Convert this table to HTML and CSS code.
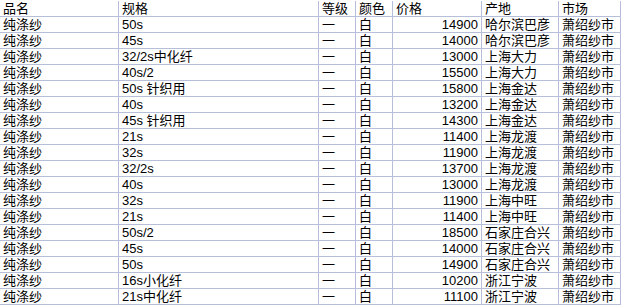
FILE: index.html
```html
<!DOCTYPE html>
<html lang="zh">
<head>
<meta charset="utf-8">
<link rel="stylesheet" href="styles.css">
</head>
<body>
<div class="sheet">
  <div class="c">品名</div><div class="c">规格</div><div class="c">等级</div><div class="c">颜色</div><div class="c">价格</div><div class="c">产地</div><div class="c">市场</div>

  <div class="c">纯涤纱</div><div class="c">50s</div><div class="c">一</div><div class="c">白</div><div class="c num">14900</div><div class="c">哈尔滨巴彦</div><div class="c">萧绍纱市</div>
  <div class="c">纯涤纱</div><div class="c">45s</div><div class="c">一</div><div class="c">白</div><div class="c num">14000</div><div class="c">哈尔滨巴彦</div><div class="c">萧绍纱市</div>
  <div class="c">纯涤纱</div><div class="c">32/2s中化纤</div><div class="c">一</div><div class="c">白</div><div class="c num">13000</div><div class="c">上海大力</div><div class="c">萧绍纱市</div>
  <div class="c">纯涤纱</div><div class="c">40s/2</div><div class="c">一</div><div class="c">白</div><div class="c num">15500</div><div class="c">上海大力</div><div class="c">萧绍纱市</div>
  <div class="c">纯涤纱</div><div class="c">50s 针织用</div><div class="c">一</div><div class="c">白</div><div class="c num">15800</div><div class="c">上海金达</div><div class="c">萧绍纱市</div>
  <div class="c">纯涤纱</div><div class="c">40s</div><div class="c">一</div><div class="c">白</div><div class="c num">13200</div><div class="c">上海金达</div><div class="c">萧绍纱市</div>
  <div class="c">纯涤纱</div><div class="c">45s 针织用</div><div class="c">一</div><div class="c">白</div><div class="c num">14300</div><div class="c">上海金达</div><div class="c">萧绍纱市</div>
  <div class="c">纯涤纱</div><div class="c">21s</div><div class="c">一</div><div class="c">白</div><div class="c num">11400</div><div class="c">上海龙渡</div><div class="c">萧绍纱市</div>
  <div class="c">纯涤纱</div><div class="c">32s</div><div class="c">一</div><div class="c">白</div><div class="c num">11900</div><div class="c">上海龙渡</div><div class="c">萧绍纱市</div>
  <div class="c">纯涤纱</div><div class="c">32/2s</div><div class="c">一</div><div class="c">白</div><div class="c num">13700</div><div class="c">上海龙渡</div><div class="c">萧绍纱市</div>
  <div class="c">纯涤纱</div><div class="c">40s</div><div class="c">一</div><div class="c">白</div><div class="c num">13000</div><div class="c">上海龙渡</div><div class="c">萧绍纱市</div>
  <div class="c">纯涤纱</div><div class="c">32s</div><div class="c">一</div><div class="c">白</div><div class="c num">11900</div><div class="c">上海中旺</div><div class="c">萧绍纱市</div>
  <div class="c">纯涤纱</div><div class="c">21s</div><div class="c">一</div><div class="c">白</div><div class="c num">11400</div><div class="c">上海中旺</div><div class="c">萧绍纱市</div>
  <div class="c">纯涤纱</div><div class="c">50s/2</div><div class="c">一</div><div class="c">白</div><div class="c num">18500</div><div class="c">石家庄合兴</div><div class="c">萧绍纱市</div>
  <div class="c">纯涤纱</div><div class="c">45s</div><div class="c">一</div><div class="c">白</div><div class="c num">14000</div><div class="c">石家庄合兴</div><div class="c">萧绍纱市</div>
  <div class="c">纯涤纱</div><div class="c">50s</div><div class="c">一</div><div class="c">白</div><div class="c num">14900</div><div class="c">石家庄合兴</div><div class="c">萧绍纱市</div>
  <div class="c">纯涤纱</div><div class="c">16s小化纤</div><div class="c">一</div><div class="c">白</div><div class="c num">10200</div><div class="c">浙江宁波</div><div class="c">萧绍纱市</div>
  <div class="c">纯涤纱</div><div class="c">21s中化纤</div><div class="c">一</div><div class="c">白</div><div class="c num">11100</div><div class="c">浙江宁波</div><div class="c">萧绍纱市</div>
</div>
</body>
</html>
```

FILE: styles.css
```css
html, body {
  margin: 0;
  padding: 0;
  background: #ffffff;
}

.sheet {
  margin-top: 1px;
  display: grid;
  grid-template-columns: 119px 200px 37px 37px 89px 77px 62px;
  grid-auto-rows: 16px;
  font-family: "Liberation Sans", "Noto Sans CJK SC", sans-serif;
  font-size: 13px;
  color: #000000;
}

.c {
  box-sizing: border-box;
  border-right: 1px solid #b7bed9;
  border-bottom: 1px solid #b7bed9;
  padding: 0 2px 0 3px;
  line-height: 15px;
  white-space: nowrap;
}

.num {
  text-align: right;
  padding-right: 3px;
}
```
